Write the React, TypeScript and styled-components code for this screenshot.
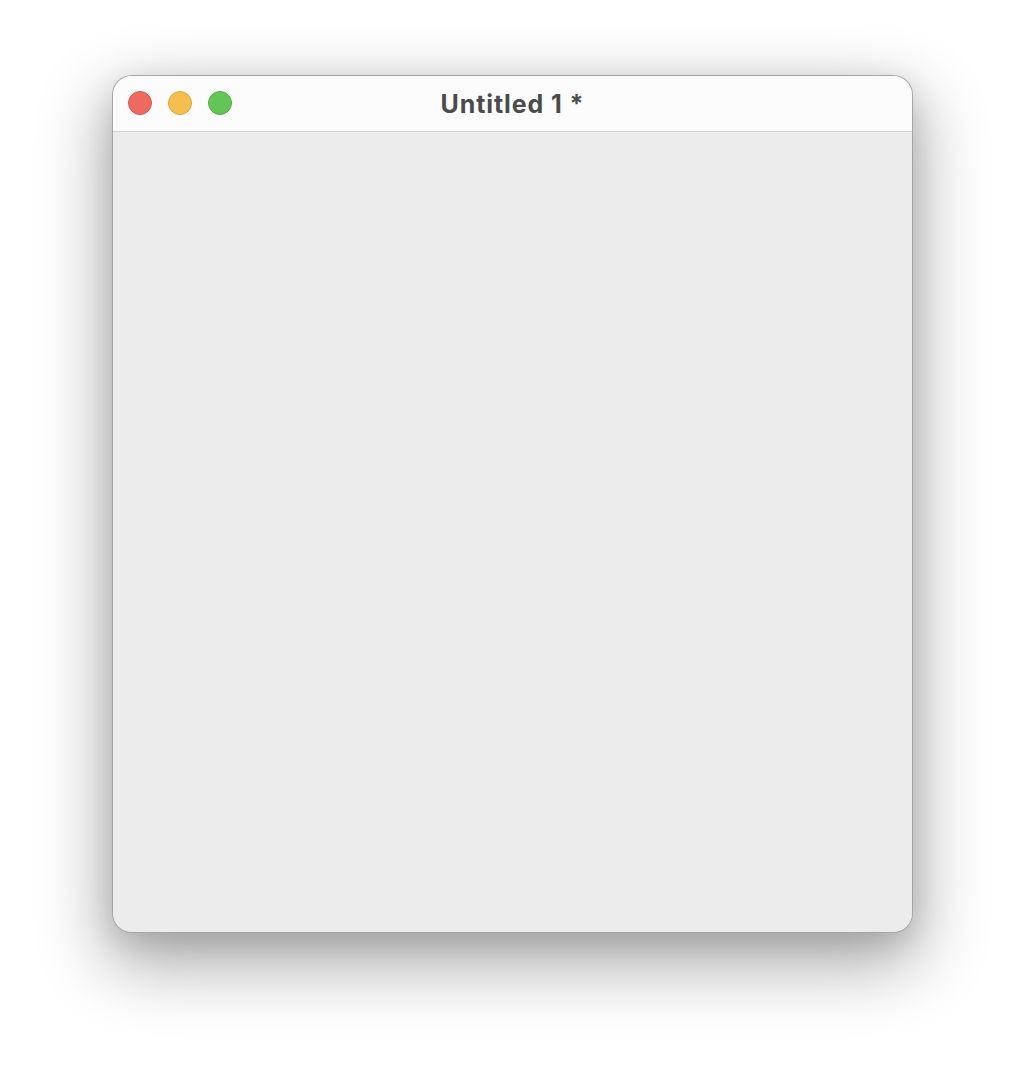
import React from "react";
import styled, { createGlobalStyle } from "styled-components";

const Global = createGlobalStyle`
  html, body { margin: 0; padding: 0; background: #ffffff; }
  body { font-family: Inter, "Noto Sans", sans-serif; }
`;

const Page = styled.div`
  display: flex;
  justify-content: flex-start;
  padding: 75px 0 0 112px;
  height: 1080px;
  box-sizing: border-box;
`;

const Window = styled.div`
  width: 801px;
  height: 858px;
  box-sizing: border-box;
  border-radius: 20px;
  border: 1px solid rgba(0, 0, 0, 0.3);
  background: #ececec;
  box-shadow: 0 26px 70px 6px rgba(0, 0, 0, 0.33), 0 10px 30px rgba(0, 0, 0, 0.12);
  overflow: hidden;
  display: flex;
  flex-direction: column;
`;

const TitleBar = styled.div`
  position: relative;
  height: 55px;
  flex: none;
  background: #fcfcfc;
  border-bottom: 1px solid #d3d3d3;
  display: flex;
  align-items: center;
  justify-content: center;
`;

const Lights = styled.div`
  position: absolute;
  left: 15px;
  top: 15px;
  display: flex;
  gap: 16px;
`;

const Light = styled.span<{ $fill: string; $edge: string }>`
  width: 24px;
  height: 24px;
  border-radius: 50%;
  box-sizing: border-box;
  background: ${(p) => p.$fill};
  border: 1px solid ${(p) => p.$edge};
`;

const Title = styled.div`
  font-family: Inter, "Noto Sans", sans-serif;
  font-weight: 700;
  font-size: 25px;
  color: #4b4b4b;
  letter-spacing: 0.9px;
`;

const Content = styled.div`
  flex: 1;
  background: #ececec;
`;

export default function App() {
  return (
    <>
      <Global />
      <Page>
        <Window>
          <TitleBar>
            <Lights>
              <Light $fill="#ee6a5f" $edge="#d6574d" />
              <Light $fill="#f6be4f" $edge="#dba43d" />
              <Light $fill="#62c655" $edge="#52ab45" />
            </Lights>
            <Title>Untitled 1 *</Title>
          </TitleBar>
          <Content />
        </Window>
      </Page>
    </>
  );
}
